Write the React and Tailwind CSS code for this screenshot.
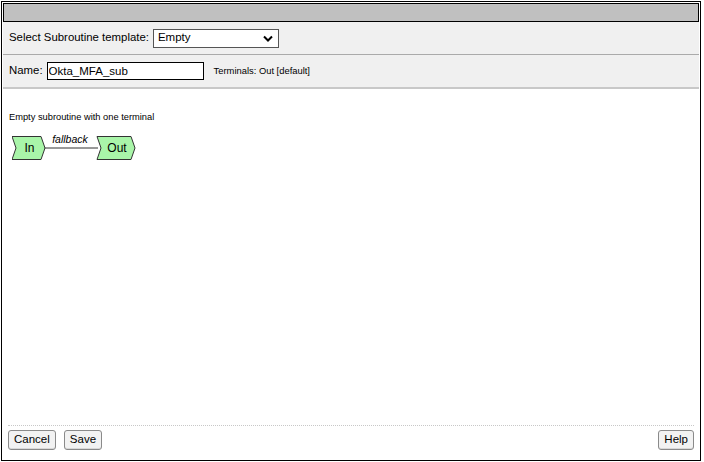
import React from 'react';

const font = { fontFamily: '"Liberation Sans", Arial, sans-serif' };

const Node = ({ x, w, label }) => {
  const pts = [
    [x, 0.5], [x + w - 4, 0.5], [x + w, 12], [x + w - 4, 23.5], [x, 23.5], [x + 4, 12],
  ].map((p) => p.join(',')).join(' ');
  return (
    <g>
      <polygon points={pts} fill="#a9f5a9" stroke="#333" strokeWidth="1" />
      <text x={x + w / 2 + 1} y={16} textAnchor="middle" fontSize="12" fill="#000">{label}</text>
    </g>
  );
};

const Button = ({ children }) => (
  <button className="h-[20px] px-[5px] text-[11.5px] leading-none text-black bg-[#f2f2f2] border border-[#8a8a8a] rounded-[3px] shadow-[inset_0_-1px_0_#d8d8d8]">
    {children}
  </button>
);

const App = () => {
  return (
    <div className="w-[704px] h-[462px] bg-white overflow-hidden" style={font}>
      <div className="ml-[1px] mt-[1px] w-[700px] h-[460px] border border-black p-[1px] flex flex-col">
        {/* Title bar */}
        <div className="h-[19px] bg-[#c0c0c0] border border-black shrink-0" />

        {/* Template row */}
        <div className="h-[33px] bg-[#f0f0f0] border-b border-[#aaaaaa] flex items-center pl-[6px] gap-[4px] shrink-0">
          <span className="text-[11.4px] text-black">Select Subroutine template:</span>
          <div className="w-[126px] h-[19px] bg-white border border-[#555] flex items-center justify-between pl-[4px] pr-[5px]">
            <span className="text-[11.5px] text-black">Empty</span>
            <svg width="10" height="7" viewBox="0 0 10 7">
              <path d="M1 1.5 L5 5.5 L9 1.5" fill="none" stroke="#000" strokeWidth="2" />
            </svg>
          </div>
        </div>

        {/* Name row */}
        <div className="h-[34px] bg-[#f0f0f0] border-b-2 border-[#c8c8c8] flex items-center pl-[6px] shrink-0">
          <span className="text-[11.4px] text-black mr-[4px]">Name:</span>
          <input
            defaultValue="Okta_MFA_sub"
            className="w-[157px] h-[18px] bg-white border border-black px-[1px] text-[11.5px] text-black outline-none"
            style={font}
          />
          <span className="text-[9.4px] text-black ml-[10px]">Terminals: Out [default]</span>
        </div>

        {/* Content */}
        <div className="flex-1 bg-white flex flex-col">
          <div className="pl-[6px] pt-[22px] text-[9.3px] text-black">Empty subroutine with one terminal</div>
          <svg width="140" height="30" viewBox="0 0 140 30" className="ml-[9px] mt-[6px]">
            <g transform="translate(0,5)">
              <line x1="32" y1="12" x2="86" y2="12" stroke="#333" strokeWidth="1" />
              <text x="58" y="7" textAnchor="middle" fontSize="10.5" fontStyle="italic" fill="#000">fallback</text>
              <Node x={0} w={33} label="In" />
              <Node x={85} w={38} label="Out" />
            </g>
          </svg>
        </div>

        {/* Footer */}
        <div className="mx-[5px] border-t border-dotted border-[#c8c8c8] pt-[4px] pb-[9px] flex items-center gap-[8px]">
          <Button>Cancel</Button>
          <Button>Save</Button>
          <div className="flex-1" />
          <Button>Help</Button>
        </div>
      </div>
    </div>
  );
};

export default App;
